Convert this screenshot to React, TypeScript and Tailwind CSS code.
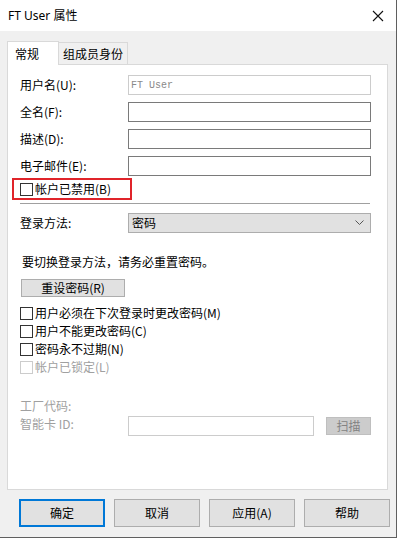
import React from "react";

const cjk = { fontFamily: '"Noto Sans CJK SC", "Noto Sans", sans-serif' };

const Box = ({ disabled = false }: { disabled?: boolean }) => (
  <span
    className={`w-[13px] h-[13px] shrink-0 border bg-white ${
      disabled ? "border-[#cccccc]" : "border-[#333333]"
    }`}
  />
);

const Check = ({ label, disabled = false }: { label: string; disabled?: boolean }) => (
  <div className="flex items-center h-[18px] gap-[2px]">
    <Box disabled={disabled} />
    <span className={`text-[12px] leading-none ${disabled ? "text-[#a0a0a0]" : "text-black"}`}>{label}</span>
  </div>
);

const Field = ({ label, value, disabled = false }: { label: string; value?: string; disabled?: boolean }) => (
  <div className="flex items-center h-[20px]">
    <span className="w-[108px] text-[12px] leading-none text-black">{label}</span>
    <div
      className={`w-[243px] h-[20px] bg-white border flex items-center px-[2px] ${
        disabled ? "border-[#cccccc]" : "border-[#7a7a7a]"
      }`}
    >
      {value && (
        <span className="text-[10px] text-[#8a8a8a]" style={{ fontFamily: '"Liberation Mono", monospace' }}>
          {value}
        </span>
      )}
    </div>
  </div>
);

const DlgButton = ({ label, primary = false }: { label: string; primary?: boolean }) => (
  <div
    className={`w-[86px] h-[28px] flex items-center justify-center bg-[#e1e1e1] text-[12px] text-black ${
      primary ? "border-2 border-[#0078d7]" : "border border-[#adadad]"
    }`}
  >
    {label}
  </div>
);

export default function App() {
  return (
    <div className="w-[401px] h-[539px] bg-white" style={cjk}>
      <div className="w-[397px] h-[538px] bg-[#f0f0f0] border-r border-b border-[#5f5f5f] flex flex-col">
        {/* title bar */}
        <div className="h-[31px] bg-white flex items-center justify-between pl-[8px] pr-[12px]">
          <span className="text-[12px] text-black" style={{ fontFamily: '"Noto Sans", "Noto Sans CJK SC", sans-serif' }}>
            FT User 属性
          </span>
          <svg width="12" height="12" viewBox="0 0 12 12">
            <path d="M1 1 L11 11 M11 1 L1 11" stroke="#111" strokeWidth="1.1" />
          </svg>
        </div>

        {/* tabs */}
        <div className="flex items-end h-[33px] pl-[7px] pt-[10px]">
          <div className="w-[52px] h-[24px] bg-white border border-b-0 border-[#d9d9d9] flex items-center pl-[7px] text-[12px] text-black relative z-10 -mb-px">
            常规
          </div>
          <div className="w-[69px] h-[22px] bg-[#f0f0f0] border border-l-0 border-b-0 border-[#d9d9d9] flex items-center justify-center text-[12px] text-black">
            组成员身份
          </div>
        </div>

        {/* panel */}
        <div className="ml-[7px] w-[381px] h-[426px] bg-white border border-[#d9d9d9] flex flex-col pl-[12px] pt-[10px]">
          <div className="flex flex-col gap-[7px]">
            <Field label="用户名(U):" value="FT User" disabled />
            <Field label="全名(F):" />
            <Field label="描述(D):" />
            <Field label="电子邮件(E):" />
          </div>

          <div className="-ml-[8px] mt-[2px] w-[120px] h-[22px] border-2 border-[#e0242a] flex items-center pl-[6px] gap-[2px]">
            <Box />
            <span className="text-[12px] leading-none text-black">帐户已禁用(B)</span>
          </div>

          <div className="mt-[3px] w-[350px] h-px bg-[#a0a0a0]" />

          <div className="mt-[9px] flex items-center h-[20px]">
            <span className="w-[108px] text-[12px] leading-none text-black">登录方法:</span>
            <div className="w-[243px] h-[20px] bg-[#e1e1e1] border border-[#adadad] flex items-center justify-between pl-[3px] pr-[6px]">
              <span className="text-[12px] leading-none text-black">密码</span>
              <svg width="9" height="6" viewBox="0 0 9 6">
                <path d="M0.5 0.5 L4.5 4.5 L8.5 0.5" stroke="#555" strokeWidth="1" fill="none" />
              </svg>
            </div>
          </div>

          <div className="mt-[20px] pl-[2px] text-[12px] leading-none text-black h-[18px] flex items-center">
            要切换登录方法，请务必重置密码。
          </div>

          <div className="mt-[8px] ml-[1px] w-[104px] h-[18px] bg-[#e1e1e1] border border-[#adadad] flex items-center justify-center text-[12px] leading-none text-black">
            重设密码(R)
          </div>

          <div className="mt-[7px] flex flex-col">
            <Check label="用户必须在下次登录时更改密码(M)" />
            <Check label="用户不能更改密码(C)" />
            <Check label="密码永不过期(N)" />
            <Check label="帐户已锁定(L)" disabled />
          </div>

          <div className="mt-[22px] h-[16px] flex items-center text-[12px] leading-none text-[#a0a0a0]">工厂代码:</div>

          <div className="mt-[2px] flex items-start h-[20px]">
            <span className="w-[108px] text-[12px] leading-none text-[#a0a0a0] pt-[2px]">智能卡 ID:</span>
            <div className="w-[186px] h-[20px] bg-white border border-[#cccccc]" />
            <div className="ml-[12px] mt-px w-[45px] h-[18px] bg-[#cccccc] border border-[#bfbfbf] flex items-center justify-center text-[12px] leading-none text-[#838383]">
              扫描
            </div>
          </div>
        </div>

        {/* buttons */}
        <div className="flex pl-[19px] pt-[9px] gap-[9px]">
          <DlgButton label="确定" primary />
          <DlgButton label="取消" />
          <DlgButton label="应用(A)" />
          <DlgButton label="帮助" />
        </div>
      </div>
    </div>
  );
}
